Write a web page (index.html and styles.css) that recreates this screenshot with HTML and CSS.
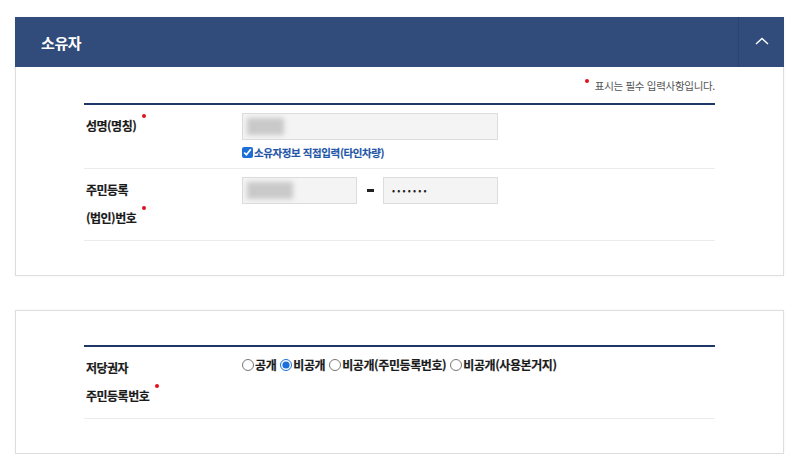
FILE: index.html
```html
<!DOCTYPE html>
<html lang="ko">
<head>
<meta charset="utf-8">
<link rel="stylesheet" href="styles.css">
</head>
<body>
<div class="page">
  <section class="card">
    <header class="card-head">
      <h2 class="card-title">소유자</h2>
      <button class="toggle" type="button" aria-label="접기">
        <svg width="14" height="8" viewBox="0 0 14 8"><path d="M1 7 L7 1.5 L13 7" fill="none" stroke="#fff" stroke-width="1.4"/></svg>
      </button>
    </header>
    <div class="card-body">
      <p class="notice"><span class="req"></span>표시는 필수 입력사항입니다.</p>
      <div class="form">
        <div class="row">
          <div class="label">성명(명칭)<span class="req"></span></div>
          <div class="value">
            <div class="field wide"><span class="blur b1"></span></div>
            <label class="check"><input type="checkbox" checked>소유자정보 직접입력(타인차량)</label>
          </div>
        </div>
        <div class="row">
          <div class="label">주민등록<br>(법인)번호<span class="req"></span></div>
          <div class="value">
            <div class="rrn">
              <div class="field half"><span class="blur b2"></span></div>
              <span class="dash"><span class="dash-bar"></span></span>
              <div class="field half"><span class="dots">•••••••</span></div>
            </div>
          </div>
        </div>
      </div>
    </div>
  </section>

  <section class="card">
    <div class="card-body top">
      <div class="form">
        <div class="row">
          <div class="label">저당권자<br>주민등록번호<span class="req"></span></div>
          <div class="value">
            <div class="radios">
              <label class="radio"><input type="radio" name="pub">공개</label>
              <label class="radio"><input type="radio" name="pub" checked>비공개</label>
              <label class="radio"><input type="radio" name="pub">비공개(주민등록번호)</label>
              <label class="radio"><input type="radio" name="pub">비공개(사용본거지)</label>
            </div>
          </div>
        </div>
      </div>
    </div>
  </section>
</div>
</body>
</html>
```

FILE: styles.css
```css
* { box-sizing: border-box; }
html, body { margin: 0; padding: 0; background: #fff; }
body {
  font-family: "Noto Sans CJK KR", "Noto Sans", sans-serif;
  color: #222;
}
.page {
  padding: 17px 16px 0 15px;
  display: flex;
  flex-direction: column;
  gap: 34px;
}
.card {
  border: 1px solid #dedede;
  box-shadow: 0 0 2px rgba(0,0,0,0.06);
  background: #fff;
}
.card-head {
  height: 50px;
  margin: -1px -1px 0 -1px;
  background: #314c7b;
  display: flex;
  align-items: center;
  justify-content: space-between;
}
.card-title {
  margin: 0 0 0 26px;
  color: #fff;
  font-size: 15px;
  font-weight: 700;
  letter-spacing: -0.4px;
}
.toggle {
  width: 46px;
  height: 100%;
  border: 0;
  border-left: 1px solid #2b436f;
  background: transparent;
  display: flex;
  align-items: center;
  justify-content: center;
  padding: 0 0 2px 0;
}
.card-body {
  padding: 0 68px 34px 68px;
}
.card-body.top { padding-top: 34px; }
.notice {
  margin: 0;
  height: 36px;
  display: flex;
  align-items: center;
  justify-content: flex-end;
  font-size: 10.5px;
  letter-spacing: -0.3px;
  color: #555;
}
.notice .req { margin: 0 6px 8px 0; }
.form {
  border-top: 2px solid #1f3766;
}
.row {
  display: flex;
  border-bottom: 1px solid #ececec;
  padding: 7px 0 8px 0;
}
.label {
  width: 158px;
  flex: none;
  padding-left: 2px;
  font-size: 12px;
  font-weight: 700;
  line-height: 28px;
  letter-spacing: -0.5px;
  color: #1a1a1a;
  -webkit-text-stroke: 0.2px #1a1a1a;
}
.req {
  display: inline-block;
  width: 4px;
  height: 4px;
  border-radius: 50%;
  background: #e3101a;
  margin-left: 6px;
  vertical-align: 13px;
}
.value {
  padding-top: 1px;
  flex: 1;
}
.field {
  height: 27px;
  background: #f4f4f4;
  border: 1px solid #dcdcdc;
  display: flex;
  align-items: center;
  padding-left: 4px;
}
.field.wide { width: 256px; }
.field.half { width: 115px; }
.blur {
  display: block;
  height: 17px;
  background: #c9c9c9;
  filter: blur(2.5px);
}
.b1 { width: 37px; }
.b2 { width: 46px; }
.dots {
  font-size: 9px;
  letter-spacing: 2.2px;
  color: #222;
  padding-left: 4px;
}
.rrn {
  display: flex;
  align-items: center;
}
.dash {
  width: 26px;
  display: flex;
  justify-content: center;
  align-items: center;
}
.dash-bar {
  width: 7px;
  height: 3px;
  background: #222;
}
.check {
  display: flex;
  align-items: center;
  margin-top: 5px;
  font-size: 10.5px;
  font-weight: 700;
  letter-spacing: -0.4px;
  color: #1f56a8;
  -webkit-text-stroke: 0.15px #1f56a8;
}
.check input {
  margin: 0 1px 0 0;
  width: 11px;
  height: 11px;
  accent-color: #1a6fd8;
}
.radios {
  display: flex;
  gap: 4px;
  padding-top: 1px;
}
.radio {
  display: flex;
  align-items: center;
  font-size: 12px;
  font-weight: 700;
  letter-spacing: -0.4px;
  color: #1a1a1a;
  -webkit-text-stroke: 0.2px #1a1a1a;
}
.radio input {
  margin: 0 1px 0 0;
  width: 12px;
  height: 12px;
  accent-color: #1a6fd8;
}
```
